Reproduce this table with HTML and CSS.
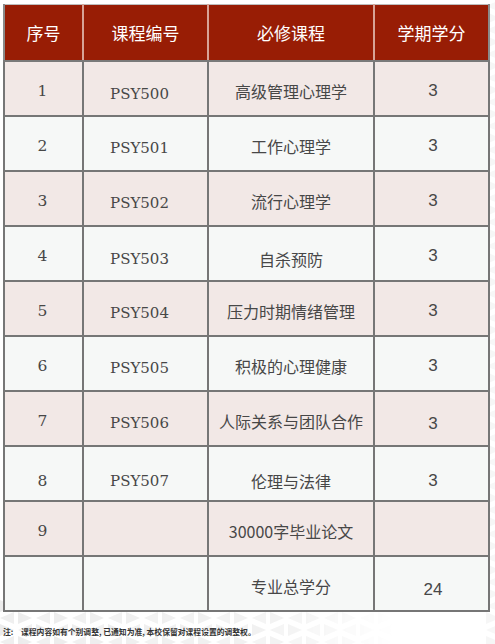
FILE: index.html
```html
<!DOCTYPE html>
<html lang="zh">
<head>
<meta charset="utf-8">
<title>课程</title>
<link rel="stylesheet" href="styles.css">
</head>
<body>
<svg class="bg" width="495" height="644" aria-hidden="true">
  <defs>
    <pattern id="tri" width="36" height="24" patternUnits="userSpaceOnUse">
      <polygon points="0,0 14,6 0,12" fill="#ececec"/>
      <polygon points="32,0 18,6 32,12" fill="#efefef"/>
      <polygon points="18,12 32,18 18,24" fill="#ececec"/>
      <polygon points="14,12 0,18 14,24" fill="#efefef"/>
    </pattern>
    <linearGradient id="fade" x1="0" x2="1" y1="0" y2="0">
      <stop offset="0" stop-color="#fff" stop-opacity="1"/>
      <stop offset="0.55" stop-color="#fff" stop-opacity="0.7"/>
      <stop offset="0.8" stop-color="#fff" stop-opacity="0"/>
    </linearGradient>
    <mask id="m">
      <rect width="495" height="644" fill="url(#fade)"/>
    </mask>
  </defs>
  <rect x="0" y="600" width="495" height="44" fill="url(#tri)" mask="url(#m)"/>
  <rect x="486" y="0" width="9" height="644" fill="url(#tri)" opacity="0.5"/>
</svg>
<main class="page">
  <table class="courses">
    <colgroup>
      <col class="c-no">
      <col class="c-code">
      <col class="c-name">
      <col class="c-credit">
    </colgroup>
    <thead>
      <tr>
        <th>序号</th>
        <th>课程编号</th>
        <th>必修课程</th>
        <th>学期学分</th>
      </tr>
    </thead>
    <tbody>
      <tr class="odd"><td class="no">1</td><td class="code low">PSY500</td><td class="name">高级管理心理学</td><td class="credit">3</td></tr>
      <tr class="even"><td class="no">2</td><td class="code">PSY501</td><td class="name">工作心理学</td><td class="credit">3</td></tr>
      <tr class="odd"><td class="no">3</td><td class="code">PSY502</td><td class="name">流行心理学</td><td class="credit">3</td></tr>
      <tr class="even"><td class="no">4</td><td class="code low">PSY503</td><td class="name low">自杀预防</td><td class="credit">3</td></tr>
      <tr class="odd"><td class="no">5</td><td class="code">PSY504</td><td class="name">压力时期情绪管理</td><td class="credit">3</td></tr>
      <tr class="even"><td class="no">6</td><td class="code">PSY505</td><td class="name">积极的心理健康</td><td class="credit">3</td></tr>
      <tr class="odd"><td class="no">7</td><td class="code">PSY506</td><td class="name">人际关系与团队合作</td><td class="credit low">3</td></tr>
      <tr class="even r8"><td class="no">8</td><td class="code">PSY507</td><td class="name">伦理与法律</td><td class="credit">3</td></tr>
      <tr class="odd"><td class="no">9</td><td class="code"></td><td class="name">30000字毕业论文</td><td class="credit"></td></tr>
      <tr class="even"><td class="no"></td><td class="code"></td><td class="name">专业总学分</td><td class="credit lower">24</td></tr>
    </tbody>
  </table>
  <p class="note"><span class="note-label">注:</span>课程内容如有个别调整, 已通知为准, 本校保留对课程设置的调整权。</p>
</main>
</body>
</html>
```
FILE: styles.css
```css
html, body {
  margin: 0;
  padding: 0;
  background: #ffffff;
}

body {
  width: 495px;
  height: 644px;
  position: relative;
  overflow: hidden;
  font-family: "Noto Sans CJK SC", "Noto Sans", sans-serif;
}

.bg {
  position: absolute;
  left: 0;
  top: 0;
  z-index: 0;
}

.page {
  position: relative;
  z-index: 1;
  padding: 4px 0 0 3px;
}

.courses {
  border-collapse: collapse;
  table-layout: fixed;
  width: 485px;
}

.c-no { width: 79px; }
.c-code { width: 125px; }
.c-name { width: 166px; }
.c-credit { width: 115px; }

.courses thead tr {
  height: 56px;
}

.courses th {
  background: #981d05;
  color: #ffffff;
  font-family: "Noto Sans CJK SC", sans-serif;
  font-weight: 400;
  font-size: 17px;
  text-align: center;
  vertical-align: middle;
  padding: 0;
  border-top: 1px solid #bdbdbd;
  border-left: 2px solid #d8a396;
  border-right: 2px solid #d8a396;
  border-bottom: 2px solid #7a7a7a;
}

.courses th:first-child {
  border-left: 2px solid #8a8a8a;
}

.courses th:last-child {
  border-right: 2px solid #8a8a8a;
}

.courses tbody tr {
  height: 55px;
}

.courses tr.odd td { background: #f2e8e6; }
.courses tr.even td { background: #f6f8f7; }

.courses td {
  border: 2px solid #767676;
  padding: 5px 0 0 0;
  text-align: center;
  vertical-align: middle;
  color: #474747;
  font-size: 16px;
  line-height: 20px;
}

.courses td.no {
  font-family: "DejaVu Serif", "Liberation Serif", serif;
  font-size: 15.5px;
  padding-right: 2px;
}

.courses td.code {
  font-family: "DejaVu Serif", "Liberation Serif", serif;
  font-size: 15px;
  padding-top: 9px;
  padding-right: 12px;
}

.courses td.name {
  font-family: "Noto Sans CJK SC", sans-serif;
  font-size: 16px;
}

.courses td.credit {
  font-family: "Liberation Sans", Arial, sans-serif;
  font-size: 17px;
  padding-left: 3px;
}

.courses td.low {
  padding-top: 12px;
}

.courses td.lower {
  padding-top: 14px;
}

.courses tr.r8 td {
  padding-top: 16px;
}

.note {
  margin: 15px 0 0 0;
  font-size: 7.8px;
  line-height: 10px;
  color: #333333;
  font-weight: 700;
}

.note-label {
  display: inline-block;
  width: 18px;
}
```
